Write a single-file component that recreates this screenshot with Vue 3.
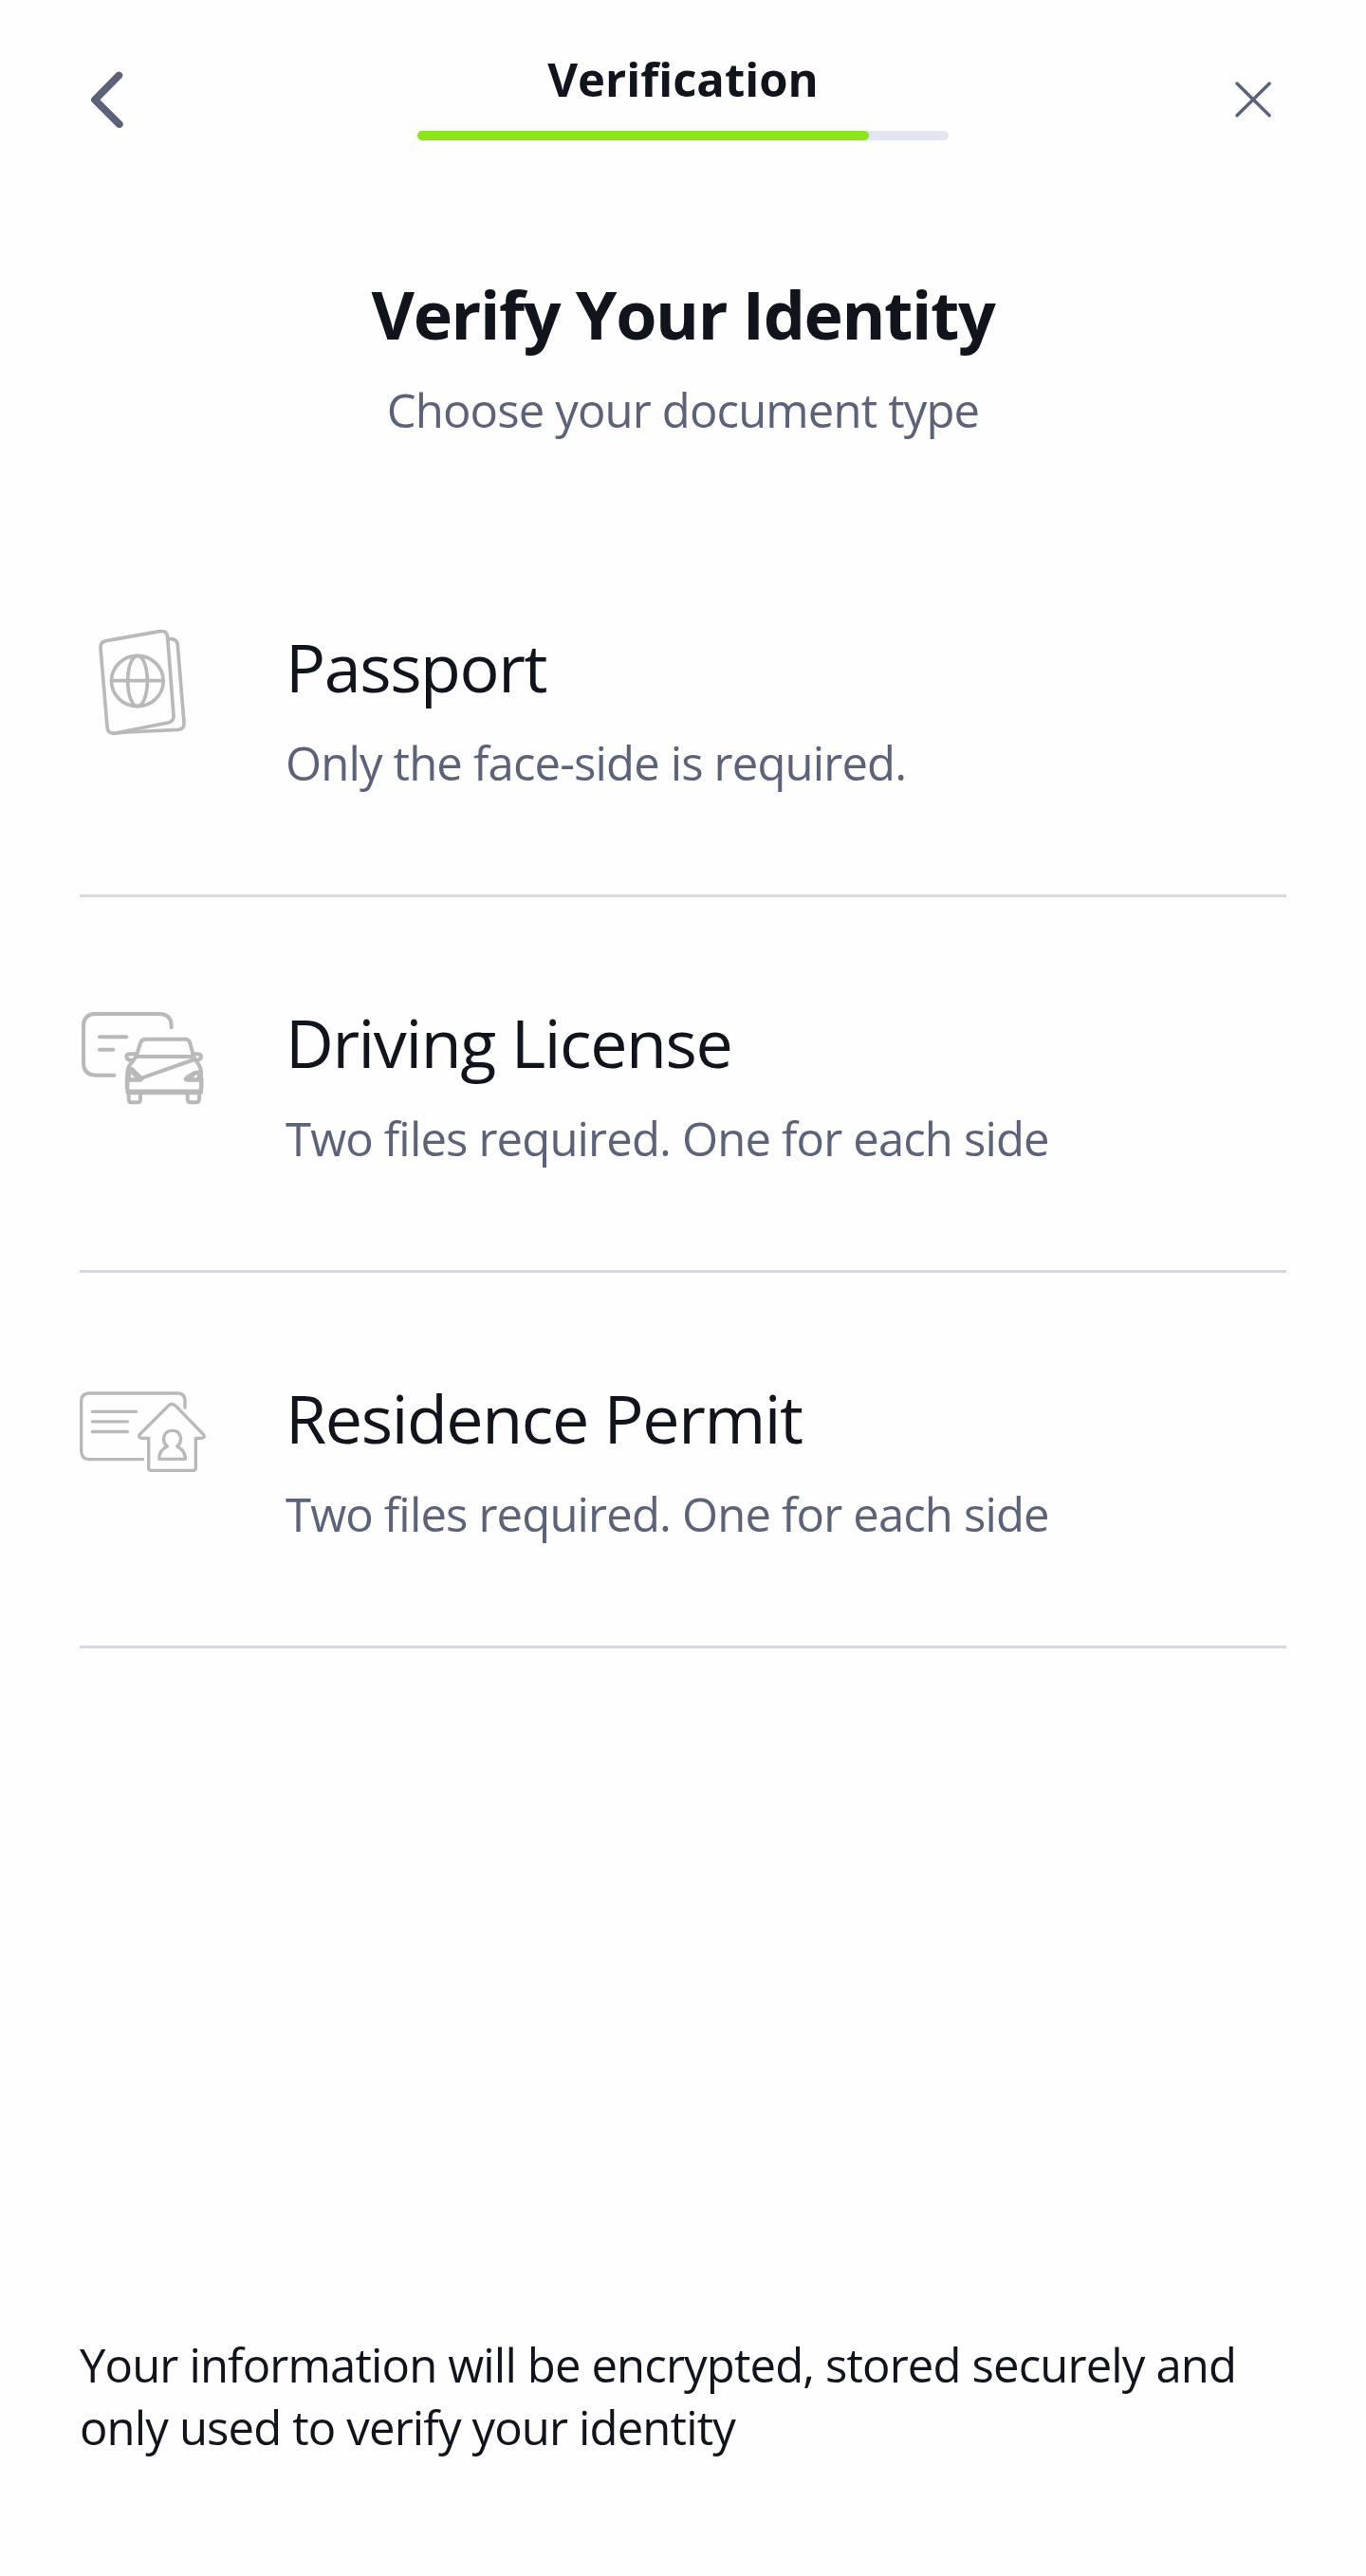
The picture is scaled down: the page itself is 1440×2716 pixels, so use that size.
<script setup>
const progress = 85

const documents = [
  { id: 'passport', name: 'Passport', note: 'Only the face-side is required.' },
  { id: 'license', name: 'Driving License', note: 'Two files required. One for each side' },
  { id: 'permit', name: 'Residence Permit', note: 'Two files required. One for each side' },
]
</script>

<template>
  <main class="page">
    <header class="header">
      <button class="nav" aria-label="Back">
        <svg class="back" viewBox="0 0 44 68" fill="none">
          <path d="M35.3 9.6 10 35.2 35.8 60.9" stroke="#5b627a" stroke-width="7.8" stroke-linecap="round" stroke-linejoin="round" />
        </svg>
      </button>
      <div class="progress-block">
        <div class="step">Verification</div>
        <div class="track"><div class="bar" :style="{ width: progress + '%' }"></div></div>
      </div>
      <button class="nav nav-end" aria-label="Close">
        <svg class="close" viewBox="0 0 44 44" fill="none">
          <path d="M5 5 39.2 38.8M39.2 5 5 38.8" stroke="#5b627a" stroke-width="3.4" stroke-linecap="round" />
        </svg>
      </button>
    </header>

    <section class="intro">
      <h1>Verify Your Identity</h1>
      <p>Choose your document type</p>
    </section>

    <ul class="documents">
      <li v-for="doc in documents" :key="doc.id" class="document">
        <svg v-if="doc.id === 'passport'" class="icon" viewBox="12 45 408 360" stroke-width="11">
          <path d="M95 107 265 77Q288 73 290 96L309 342Q311 362 291 366L124 399Q101 403 99 378L78 130Q77 110 95 107Z" />
          <path d="M293 101H301Q321 102 322 122L342 366Q344 386 324 388L160 396L119 400" />
          <ellipse cx="194.500" cy="234" rx="82" ry="80" />
          <ellipse cx="195" cy="234" rx="31" ry="80" />
          <path d="M112 233H277" />
        </svg>
        <svg v-else-if="doc.id === 'license'" class="icon" viewBox="42 3 408 360" stroke-width="12">
          <path d="M332 100V93Q331 58 295 57H91Q54 58 54 96V211Q54 250 92 251H151" />
          <path d="M105 130H190M105 170H148" />
          <path d="M221 191 234 149Q238 137 250 137H375Q388 137 391 149L402 191" />
          <path d="M220 192H403M240 259 405 201" />
          <path d="M218 184H201Q190 184 190 192Q191 203 204 203H211M400 184H415Q427 184 426 193Q425 203 411 203H408" />
          <path d="M221 192 198 222Q193 230 193 241V290Q193 306 207 306H410Q426 306 426 290V239Q425 227 419 219L402 192" />
          <path d="M197 230 207 231 236 259Q242 264 235 266H198M424 240 404 244 381 258Q373 264 380 266H423" />
          <path d="M198 227 235 258V267H195ZM425 235 402 244 379 260V267H425Z" fill="#b9b9b9" stroke="none" />
          <path d="M205 259 203 245 216 259ZM413 259V248L401 258Z" fill="#fff" stroke="none" />
          <path d="M196 304H424" stroke-width="17" />
          <path d="M192 260V292M427 260V292" stroke-width="13" />
          <path d="M197 310V327Q197 337 207 337H224Q234 337 234 327V310M383 310V327Q383 337 393 337H410Q420 337 420 327V310" />
        </svg>
        <svg v-else class="icon" viewBox="42 -9 408 360" stroke-width="10">
          <path d="M375 103V79Q374 57 351 57H72Q47 57 47 82V239Q47 265 73 266H242" />
          <path d="M82 115H221M82 146.500H193M82 178.500H193" />
          <path d="M260 199V293Q260 301 268 301H401Q409 301 409 293V199H429Q440 197 433 187L347 98Q335 85 322 97L232 187Q226 197 239 199Z" />
          <path d="M294 265Q292 238 319 225C299 208 307 175 335 175S370 208 350 225Q377 239 376 265Z" />
        </svg>
        <div class="details">
          <h2>{{ doc.name }}</h2>
          <p>{{ doc.note }}</p>
        </div>
      </li>
    </ul>

    <footer class="footer">Your information will be encrypted, stored securely and only used to verify your identity</footer>
  </main>
</template>

<style>
body {
  margin: 0;
  background: #fefefe;
}
</style>

<style scoped>
.page {
  box-sizing: border-box;
  display: flex;
  flex-direction: column;
  width: 1440px;
  min-height: 2716px;
  padding: 50px 84px 124px;
  background: #fefefe;
  color: #11141c;
  font-family: "Open Sans", "Noto Sans", sans-serif;
  font-size: 49px;
  line-height: 66px;
  letter-spacing: -0.855px;
}

h1,
h2,
p,
ul {
  margin: 0;
  padding: 0;
}

.header {
  display: flex;
  justify-content: space-between;
  height: 98px;
}

.nav {
  display: flex;
  width: 64px;
  padding: 0;
  border: 0;
  background: none;
}

.back {
  width: 44px;
  height: 68px;
  margin: 20px 0 0 6px;
}

.nav-end {
  justify-content: flex-end;
}

.close {
  width: 44px;
  height: 44px;
  margin: 33px 13px 0 0;
}

.progress-block {
  width: 560px;
}

.step {
  font-weight: 700;
  letter-spacing: normal;
  text-align: center;
}

.track {
  height: 10px;
  margin-top: 22px;
  border-radius: 5px;
  background: #e2e6f0;
}

.bar {
  height: 10px;
  border-radius: 5px;
  background: #8ae615;
}

.intro {
  margin-top: 135px;
  text-align: center;
}

h1 {
  font-size: 70px;
  line-height: 96px;
  font-weight: 700;
  letter-spacing: -1.4px;
}

.intro p,
.details p {
  margin-top: 20px;
  color: #5b627a;
}

.documents {
  margin-top: 85px;
  list-style: none;
}

.document {
  display: flex;
  padding: 105px 0 106px;
  border-bottom: 3px solid #d5d8e4;
}

.icon {
  width: 136px;
  height: 120px;
  margin-right: 81px;
  overflow: visible;
  fill: none;
  stroke: #b9b9b9;
  stroke-linecap: round;
  stroke-linejoin: round;
}

h2 {
  font-size: 70px;
  line-height: 96px;
  font-weight: 400;
  letter-spacing: -1.4px;
}

.footer {
  margin-top: auto;
}
</style>
